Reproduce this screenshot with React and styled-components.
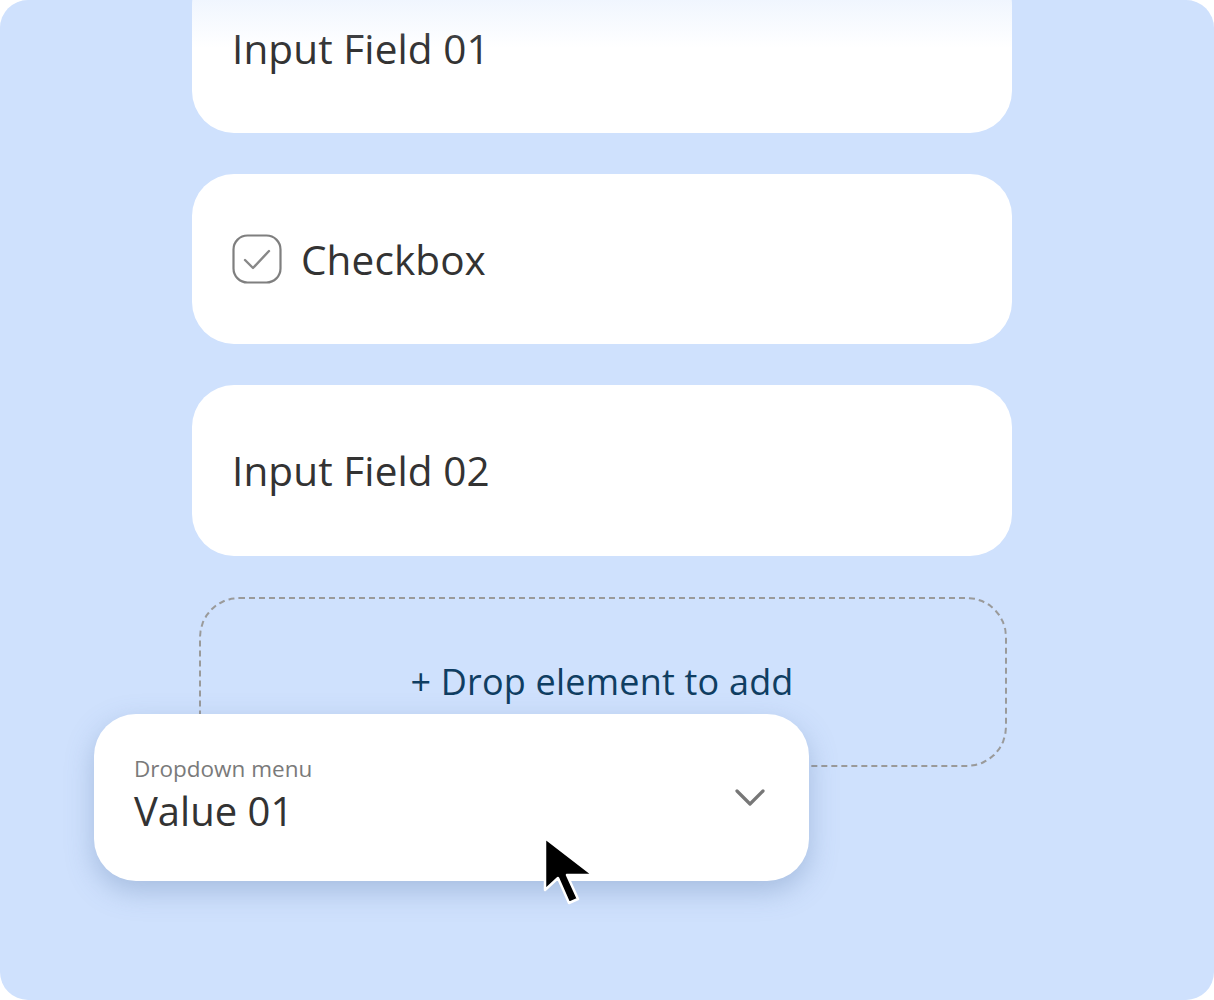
import React from "react";
import styled, { createGlobalStyle } from "styled-components";

const Global = createGlobalStyle`
  html, body { margin: 0; padding: 0; background: #ffffff; }
  body { font-family: "Open Sans", "Noto Sans", sans-serif; }
`;

const Canvas = styled.div`
  position: relative;
  width: 1214px;
  height: 1000px;
  border-radius: 28px;
  overflow: hidden;
  background: #cfe1fd;
`;

const TopFade = styled.div`
  position: absolute;
  left: 0;
  top: 0;
  right: 0;
  height: 48px;
  background: linear-gradient(to bottom, rgba(207, 225, 253, 0.3), rgba(207, 225, 253, 0));
  pointer-events: none;
`;

const Column = styled.div`
  display: flex;
  flex-direction: column;
  gap: 41px;
  width: 820px;
  margin-left: 192px;
  margin-top: -37px;
`;

const Card = styled.div`
  box-sizing: border-box;
  height: ${(p) => p.$h || 170}px;
  border-radius: 42px;
  background: #ffffff;
  display: flex;
  align-items: center;
  gap: 19px;
  padding-left: 40px;
`;

const FieldText = styled.span`
  font-family: "Open Sans", sans-serif;
  font-size: 40.5px;
  color: #333333;
  letter-spacing: 0.1px;
`;

const DropZone = styled.div`
  box-sizing: border-box;
  width: 808px;
  height: 170px;
  margin-left: 7px;
  border: 2px dashed #9a9a9a;
  border-radius: 40px;
  display: flex;
  align-items: center;
  justify-content: center;
  padding-right: 2px;
`;

const DropText = styled.span`
  font-family: "Open Sans", sans-serif;
  font-size: 36px;
  color: #0f3e62;
  letter-spacing: 0.2px;
  margin-top: -2px;
`;

const Dragged = styled.div`
  position: absolute;
  left: 94px;
  top: 714px;
  width: 715px;
  height: 167px;
  box-sizing: border-box;
  border-radius: 42px;
  background: #ffffff;
  box-shadow: 0 10px 28px rgba(90, 120, 170, 0.35);
  display: flex;
  align-items: center;
  justify-content: space-between;
  padding: 0 42px 0 40px;
`;

const DDText = styled.div`
  display: flex;
  flex-direction: column;
  gap: 8px;
  margin-top: -6px;
`;

const DDLabel = styled.span`
  font-family: "Open Sans", sans-serif;
  font-size: 22.5px;
  color: #7a7a7a;
  line-height: 24px;
`;

const DDValue = styled.span`
  font-family: "Open Sans", sans-serif;
  font-size: 40px;
  color: #333333;
  line-height: 44px;
`;

const Cursor = styled.svg`
  position: absolute;
  left: 540px;
  top: 833px;
  overflow: visible;
`;

const CheckIcon = () => (
  <svg width="50" height="50" viewBox="0 0 50 50">
    <rect x="1.5" y="1.5" width="47" height="47" rx="14" fill="none" stroke="#7f7f7f" strokeWidth="2.2" />
    <path d="M13 26 L21 34 L37 17" fill="none" stroke="#888" strokeWidth="2.4" strokeLinecap="round" strokeLinejoin="round" />
  </svg>
);

const Chevron = () => (
  <svg width="32" height="20" viewBox="0 0 32 20">
    <path d="M2 3 L15 16 L28 3" fill="none" stroke="#777" strokeWidth="3.2" strokeLinecap="round" strokeLinejoin="round" />
  </svg>
);

export default function App() {
  return (
    <>
      <Global />
      <Canvas>
        <Column>
          <Card>
            <FieldText>Input Field 01</FieldText>
          </Card>
          <Card>
            <CheckIcon />
            <FieldText>Checkbox</FieldText>
          </Card>
          <Card $h={171}>
            <FieldText>Input Field 02</FieldText>
          </Card>
          <DropZone>
            <DropText>+ Drop element to add</DropText>
          </DropZone>
        </Column>
        <TopFade />
        <Dragged>
          <DDText>
            <DDLabel>Dropdown menu</DDLabel>
            <DDValue>Value 01</DDValue>
          </DDText>
          <Chevron />
        </Dragged>
        <Cursor width="60" height="80" viewBox="0 0 60 80">
          <path
            d="M5 5 L5 57 L18 45 L29 70 L38 66 L27 42 L53 42 Z"
            fill="#000"
            stroke="#fff"
            strokeWidth="2.5"
            strokeLinejoin="round"
          />
        </Cursor>
      </Canvas>
    </>
  );
}
